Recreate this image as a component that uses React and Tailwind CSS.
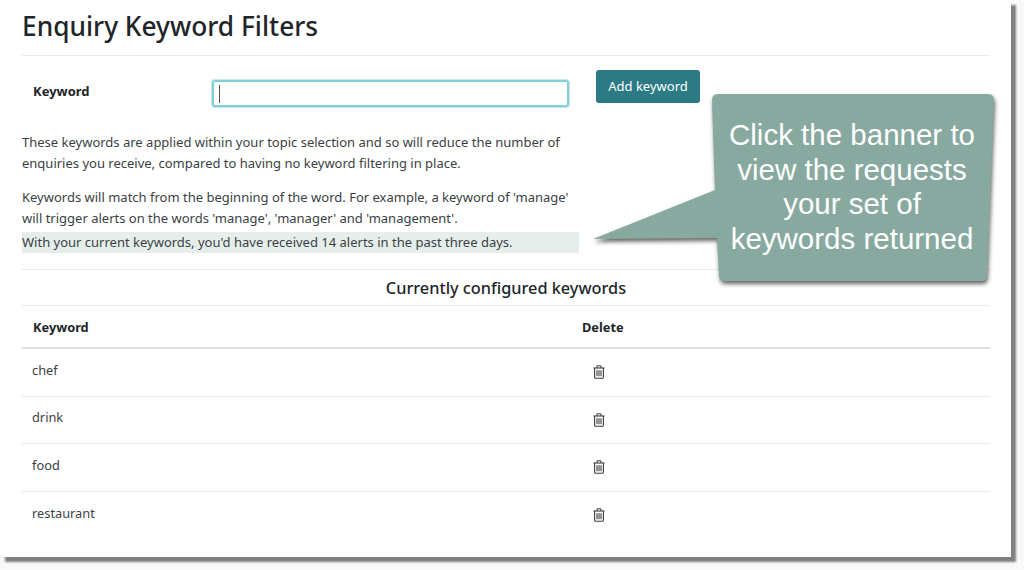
import React from "react";

const rows = ["chef", "drink", "food", "restaurant"];

function TrashIcon() {
  return (
    <svg width="12" height="14" viewBox="0 0 12 14" fill="none" stroke="#3f3a44" strokeWidth="1.1" className="block">
      <path d="M0.5 3h11" />
      <path d="M4 3V1.5C4 1 4.4 0.8 4.8 0.8h2.4C7.6 0.8 8 1 8 1.5V3" />
      <path d="M1.6 3v9.2c0 .6.4 1 1 1h6.8c.6 0 1-.4 1-1V3" />
      <path d="M4 5.3v6M6 5.3v6M8 5.3v6" />
    </svg>
  );
}

export default function App() {
  return (
    <div className="relative h-[570px] w-[1024px] overflow-hidden bg-[#f9f9f9] font-['Noto_Sans',sans-serif] text-[#212529]">
      <div className="h-[557px] w-[1011px] bg-white pl-[22px] pr-[21px] shadow-[5px_5px_2px_#808080]">
        <h1 className="flex h-[56px] items-center border-b border-[#e9ecef] pb-[1px] text-[26.3px] font-medium text-[#212529]">
          Enquiry Keyword Filters
        </h1>

        <div className="flex h-[76px] items-start">
          <label className="mt-[25px] ml-[11px] w-[179px] text-[13px] leading-5 font-bold">Keyword</label>
          <div className="mt-[24px] flex h-[27px] w-[357px] items-center rounded-[3px] border-2 border-[#7fd0da] pl-[5px] shadow-[0_0_0_1px_#cfe2e5]">
            <span className="h-[18px] w-px bg-[#555]" />
          </div>
          <button className="mt-[14px] ml-[27px] h-[33px] w-[104px] rounded-[3px] bg-[#2c7a84] text-[13px] text-white">
            Add keyword
          </button>
        </div>

        <p className="text-[13px] leading-[21px] text-[#3a3f44]">
          These keywords are applied within your topic selection and so will reduce the number of
          <br />
          enquiries you receive, compared to having no keyword filtering in place.
        </p>
        <p className="mt-[13px] text-[13px] leading-[21px] text-[#3a3f44]">
          Keywords will match from the beginning of the word. For example, a keyword of 'manage'
          <br />
          will trigger alerts on the words 'manage', 'manager' and 'management'.
        </p>
        <div className="mt-[3px] h-[21px] w-[557px] bg-[#e6eeec] text-[13px] leading-[21px] text-[#3a3f44]">
          With your current keywords, you'd have received 14 alerts in the past three days.
        </div>

        <div className="mt-[16px] flex h-[37px] items-center justify-center border-y border-[#e9ecef] pt-[1px] text-[16.3px] font-medium">
          Currently configured keywords
        </div>

        <div className="flex h-[43px] items-center border-b-2 border-[#dee2e6] pt-[2px] text-[12.8px] font-bold">
          <div className="w-[560px] pl-[11px]">Keyword</div>
          <div>Delete</div>
        </div>

        {rows.map((r) => (
          <div key={r} className="flex h-[47.5px] items-center border-b border-[#e9ecef] text-[12.8px] text-[#3a3f44] last:border-b-0">
            <div className="mb-[4px] w-[571px] pl-[10px]">{r}</div>
            <TrashIcon />
          </div>
        ))}
      </div>

      <div className="absolute top-[94px] left-[592px] h-[192px] w-[404px]">
        <svg width="404" height="192" viewBox="0 0 404 192" className="absolute inset-0" style={{ filter: "drop-shadow(1px 3px 2px rgba(0,0,0,.6))" }}>
          <path
            d="M126 0H396Q402 0 402 6L395 181Q395 187 389 187H133Q127 187 127 181L125 144L1 145L123 96L120 6Q120 0 126 0Z"
            fill="#87a9a0"
          />
        </svg>
        <div className="absolute top-[24px] left-[120px] w-[280px] text-center font-['Liberation_Sans',sans-serif] text-[29.5px] leading-[34.7px] text-white">
          Click the banner to
          <br />
          view the requests
          <br />
          your set of
          <br />
          keywords returned
        </div>
      </div>
    </div>
  );
}
